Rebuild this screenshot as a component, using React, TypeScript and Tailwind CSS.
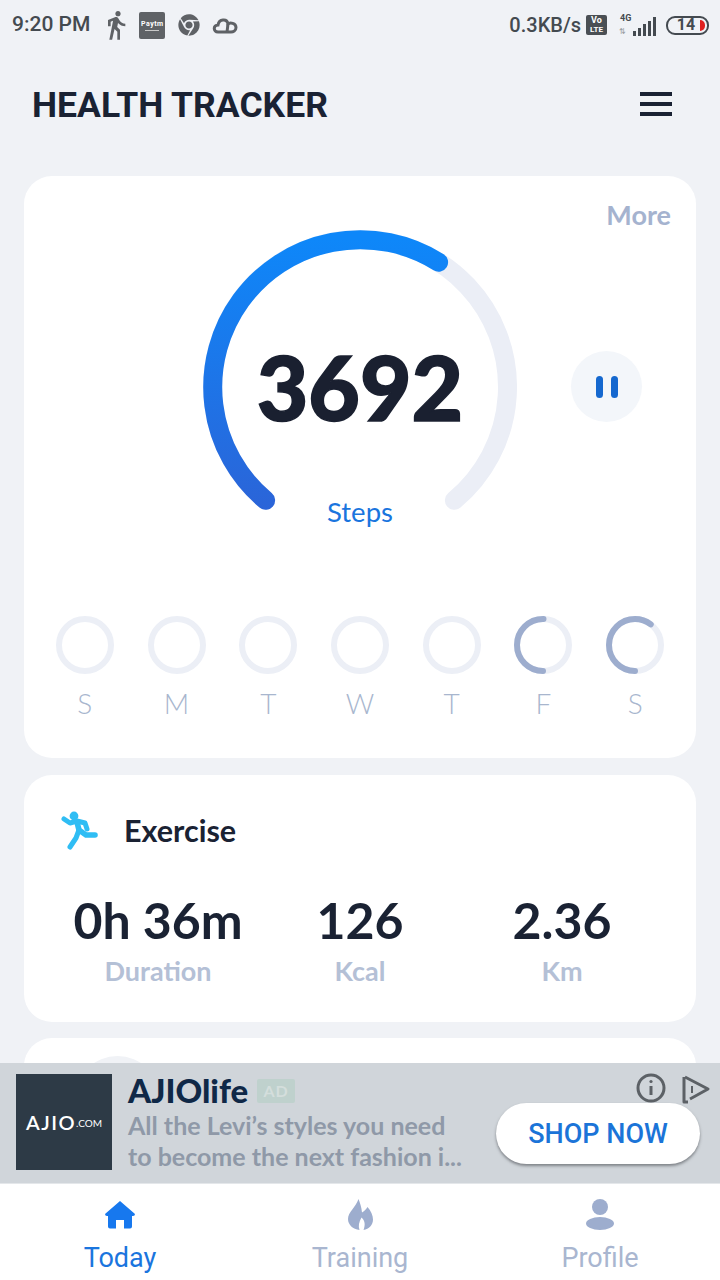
import React from 'react';
import { FaChrome } from 'react-icons/fa';
import { MdDirectionsWalk } from 'react-icons/md';

const days = [
  { label: 'S', progress: 0 },
  { label: 'M', progress: 0 },
  { label: 'T', progress: 0 },
  { label: 'W', progress: 0 },
  { label: 'T', progress: 0 },
  { label: 'F', progress: 0.5 },
  { label: 'S', progress: 0.6 },
];

const stats = [
  { value: '0h 36m', label: 'Duration' },
  { value: '126', label: 'Kcal' },
  { value: '2.36', label: 'Km' },
];

const StatusBar = () => (
  <div className="flex h-[50px] shrink-0 items-center justify-between pl-[12px] pr-[11px] font-['Roboto',sans-serif] text-[#444a50]">
    <div className="flex items-center">
      <span className="text-[21px] font-medium">9:20 PM</span>
      <MdDirectionsWalk className="ml-[10px] text-[#5f6266]" size={32} />
      <div className="ml-[7px] flex h-[27px] w-[26px] flex-col items-center justify-center rounded-[2px] bg-[#5f6266] text-white">
        <span className="text-[7px] font-bold leading-[8px] tracking-[0.5px]">Paytm</span>
        <span className="mt-[2px] h-[1px] w-[14px] bg-[#c8c8c8]" />
      </div>
      <FaChrome className="ml-[13px] text-[#5f6266]" size={22} />
      <svg className="ml-[12px]" width="26" height="18" viewBox="0 0 26 18" fill="none" stroke="#5f6266" strokeWidth="3">
        <path d="M6 16 C1 16 1 9 6 9 C7 3 15 2 16 8 C18 6 24 7 24 11.5 C24 15 21 16 19 16 Z" />
        <path d="M16 8 L15 16" />
      </svg>
    </div>
    <div className="flex items-center">
      <span className="text-[20px] font-medium">0.3KB/s</span>
      <div className="ml-[5px] flex h-[20px] w-[21px] flex-col items-center justify-center rounded-[2px] bg-[#4a4f54] text-white">
        <span className="text-[9px] font-bold leading-[9px]">Vo</span>
        <span className="text-[8px] font-bold leading-[9px]">LTE</span>
      </div>
      <div className="relative ml-[12px] h-[24px] w-[37px]">
        <span className="absolute left-[1px] top-[-1px] text-[9px] font-bold text-[#444a50]">4G</span>
        <span className="absolute left-[0px] top-[14px] text-[8px] leading-[10px] text-[#9a9da0]">⇅</span>
        <div className="absolute bottom-[1px] right-0 flex items-end gap-[2px]">
          <span className="h-[5px] w-[3px] bg-[#444a50]" />
          <span className="h-[8px] w-[3px] bg-[#444a50]" />
          <span className="h-[12px] w-[3px] bg-[#444a50]" />
          <span className="h-[15px] w-[3px] bg-[#444a50]" />
          <span className="h-[19px] w-[3px] bg-[#444a50]" />
        </div>
      </div>
      <div className="relative ml-[10px] flex h-[19px] w-[43px] items-center justify-center overflow-hidden rounded-[9px] border-2 border-[#444a50]">
        <span className="pr-[3px] text-[16px] font-bold leading-none">14</span>
        <span className="absolute bottom-[2px] right-[2px] top-[2px] w-[5px] rounded-r-[6px] bg-[#e02020]" />
      </div>
    </div>
  </div>
);

const StepGauge = () => (
  <svg width="314" height="290" viewBox="0 0 314 290" fill="none">
    <defs>
      <linearGradient id="stepBlue" gradientUnits="userSpaceOnUse" x1="157" y1="10" x2="157" y2="280">
        <stop offset="0%" stopColor="#0e87f9" />
        <stop offset="100%" stopColor="#2b64d8" />
      </linearGradient>
    </defs>
    <path d="M62.6 270.3 A147.5 147.5 0 1 1 251.4 270.3" stroke="#ebeef6" strokeWidth="19" strokeLinecap="round" />
    <path d="M62.6 270.3 A147.5 147.5 0 0 1 235.6 32.2" stroke="url(#stepBlue)" strokeWidth="19" strokeLinecap="round" />
  </svg>
);

const DayRing = ({ progress }: { progress: number }) => {
  const r = 26;
  const len = 2 * Math.PI * r;
  return (
    <svg width="58" height="58" viewBox="0 0 58 58" fill="none">
      <circle cx="29" cy="29" r={r} stroke="#eceff6" strokeWidth="6" />
      {progress > 0 && (
        <circle
          cx="29"
          cy="29"
          r={r}
          stroke="#9dadce"
          strokeWidth="6"
          strokeLinecap="round"
          strokeDasharray={`${len * progress} ${len}`}
          transform="rotate(90 29 29)"
        />
      )}
    </svg>
  );
};

const Runner = () => (
  <svg width="40" height="40" viewBox="0 0 40 40" fill="none" stroke="#2fbdf4" strokeWidth="5" strokeLinecap="round" strokeLinejoin="round">
    <circle cx="14" cy="6" r="4.4" fill="#2fbdf4" stroke="none" />
    <path d="M4 9 L10 13 L17 11 L25 13 L27 19" />
    <path d="M17 12 L19 20 L26 25 L35 25" strokeWidth="5.6" />
    <path d="M19 20 L16 28 L10 37" />
  </svg>
);

const StatsGrid = () => (
  <div className="mt-[40px] grid grid-cols-3 px-[33px] text-center font-['Lato',sans-serif]">
    {stats.map((s) => (
      <div key={s.label} className="flex flex-col items-center">
        <span className="text-[50px] font-bold leading-[60px] text-[#1a2233]">{s.value}</span>
        <span className="mt-[5px] text-[27px] font-bold leading-[32px] text-[#b4c0d6]">{s.label}</span>
      </div>
    ))}
  </div>
);

const AdBanner = () => (
  <div className="relative flex h-[120px] shrink-0 items-start bg-[#d0d5da] pl-[16px] pt-[11px]">
    <div className="flex h-[96px] w-[96px] items-center justify-center bg-[#2d3a46] font-['Lato',sans-serif] text-white">
      <span className="text-[20px] font-semibold tracking-[1.5px]">AJIO</span>
      <span className="mt-[3px] text-[10px]">.COM</span>
    </div>
    <div className="ml-[16px] mt-[-1px] flex flex-col font-['Lato',sans-serif]">
      <div className="mb-[2px] flex h-[35px] items-center">
        <span className="text-[33px] font-black leading-[35px] text-[#0f2847]">AJIOlife</span>
        <span className="ml-[9px] flex h-[24px] w-[38px] items-center justify-center rounded-[2px] bg-[#bfd1cd] text-[16px] font-bold tracking-[1px] text-[#d4dedc]">AD</span>
      </div>
      <span className="text-[25px] font-bold leading-[31px] text-[#8f99a8]">All the Levi’s styles you need</span>
      <span className="text-[25px] font-bold leading-[31px] text-[#8f99a8]">to become the next fashion i...</span>
    </div>
    <svg className="absolute left-[636px] top-[10px]" width="30" height="30" viewBox="0 0 30 30" fill="none" stroke="#5c6166" strokeWidth="3">
      <circle cx="15" cy="15" r="13" />
      <path d="M15 13 V22" />
      <circle cx="15" cy="8.5" r="1.6" fill="#5c6166" stroke="none" />
    </svg>
    <svg className="absolute left-[681px] top-[11px]" width="30" height="32" viewBox="0 0 30 32" fill="none" stroke="#5c6166" strokeWidth="3" strokeLinejoin="round">
      <path d="M4 3 L27 15 L9 25" />
      <path d="M3 3 V28 H7" />
      <path d="M11 12 V19" strokeWidth="2" />
    </svg>
    <button className="absolute left-[496px] top-[40px] h-[61px] w-[204px] rounded-full bg-white pt-[2px] font-['Roboto',sans-serif] text-[27px] font-medium text-[#1b74d8] shadow-[0_2px_3px_rgba(60,64,70,0.55)]">
      SHOP NOW
    </button>
  </div>
);

const HomeIcon = () => (
  <svg width="32" height="29" viewBox="0 0 32 29" fill="#1778ee">
    <path d="M16 1 L31 14 Q31 16 29 16 L28 16 L28 26.5 Q28 28.5 26 28.5 L20 28.5 L20 20 L12 20 L12 28.5 L6 28.5 Q4 28.5 4 26.5 L4 16 L3 16 Q1 16 1 14 Z" />
  </svg>
);

const FlameIcon = () => (
  <svg width="25" height="31" viewBox="0 0 25 31" fill="#9dadce">
    <path d="M10.5 0 C12 4 13.5 8 14 13.5 C16 12.5 18 10.5 19.5 8 C23 12 25 16.5 25 20.5 C25 26 21 30 15.5 31 C17.5 26 17 21.5 13.5 18.5 C11 23 10 27 11.5 31 C5 30 0 26 0 20 C0 13 8 8 10.5 0 Z" />
  </svg>
);

const UserIcon = () => (
  <svg width="28" height="31" viewBox="0 0 28 31" fill="#9dadce">
    <circle cx="14" cy="8" r="8" />
    <ellipse cx="14" cy="24.5" rx="14" ry="6.5" />
  </svg>
);

const BottomNav = () => (
  <div className="grid h-[96px] shrink-0 grid-cols-3 bg-white font-['Roboto',sans-serif] text-[27px]">
    <div className="flex flex-col items-center pt-[12px] text-[#1a75de]">
      <div className="flex h-[36px] items-center"><HomeIcon /></div>
      <span className="mt-[8px] leading-[36px]">Today</span>
    </div>
    <div className="flex flex-col items-center pt-[12px] text-[#a9b6d0]">
      <div className="flex h-[36px] items-center"><FlameIcon /></div>
      <span className="mt-[8px] leading-[36px]">Training</span>
    </div>
    <div className="flex flex-col items-center pt-[12px] text-[#a9b6d0]">
      <div className="flex h-[36px] items-center"><UserIcon /></div>
      <span className="mt-[8px] leading-[36px]">Profile</span>
    </div>
  </div>
);

export default function App() {
  return (
    <div className="flex h-[1280px] w-[720px] flex-col overflow-hidden bg-[#f0f2f6]">
      <StatusBar />
      <div className="min-h-0 flex-1 overflow-hidden px-[24px]">
        {/* header */}
        <div className="flex h-[126px] items-start justify-between pl-[8px] pr-[24px] pt-[32px]">
          <h1 className="font-['Roboto',sans-serif] text-[35.5px] font-bold leading-[46px] text-[#1a2233]">HEALTH TRACKER</h1>
          <div className="mt-[10px] flex w-[32px] flex-col gap-[6px]">
            <span className="h-[4px] bg-[#1a2233]" />
            <span className="h-[4px] bg-[#1a2233]" />
            <span className="h-[4px] bg-[#1a2233]" />
          </div>
        </div>

        {/* steps card */}
        <div className="relative h-[582px] rounded-[28px] bg-white pt-[54px] font-['Lato',sans-serif]">
          <span className="absolute right-[25px] top-[22px] text-[27px] font-bold leading-[34px] text-[#a5b3cf]">More</span>
          <div className="grid grid-cols-[1fr_314px_1fr] items-start">
            <div />
            <div className="relative h-[310px]">
              <StepGauge />
              <div className="absolute left-0 right-0 top-[106px] text-center text-[89px] font-black leading-[102px] text-[#1a2030] [-webkit-text-stroke:1.5px_#1a2030]">3692</div>
              <div className="absolute left-0 right-0 top-[265px] text-center text-[27.5px] leading-[34px] text-[#1a75de]">Steps</div>
            </div>
            <div className="pl-[54px] pt-[121px]">
              <div className="flex h-[71px] w-[71px] items-center justify-center gap-[8px] rounded-full bg-[#f3f6fa]">
                <span className="h-[22px] w-[7px] rounded-full bg-[#1568cf]" />
                <span className="h-[22px] w-[7px] rounded-full bg-[#1568cf]" />
              </div>
            </div>
          </div>
          <div className="mt-[76px] grid grid-cols-7 px-[15px]">
            {days.map((d, i) => (
              <div key={i} className="flex flex-col items-center">
                <DayRing progress={d.progress} />
                <span className="mt-[11px] text-[28px] font-light leading-[36px] text-[#a8b6ce]">{d.label}</span>
              </div>
            ))}
          </div>
        </div>

        {/* exercise card */}
        <div className="mt-[17px] h-[247px] rounded-[28px] bg-white pt-[35px]">
          <div className="flex items-center pl-[36px] font-['Lato',sans-serif]">
            <Runner />
            <span className="ml-[24px] text-[30.5px] font-bold leading-[40px] text-[#1a2233]">Exercise</span>
          </div>
          <StatsGrid />
        </div>

        {/* next card, cut off by the ad */}
        <div className="mt-[16px] h-[120px] rounded-[28px] bg-white pl-[51px] pt-[18px]">
          <div className="h-[85px] w-[85px] rounded-full bg-[#f0f2f6]" />
        </div>
      </div>
      <AdBanner />
      <div className="h-[1px] shrink-0 bg-[#e4e7ea]" />
      <BottomNav />
    </div>
  );
}
